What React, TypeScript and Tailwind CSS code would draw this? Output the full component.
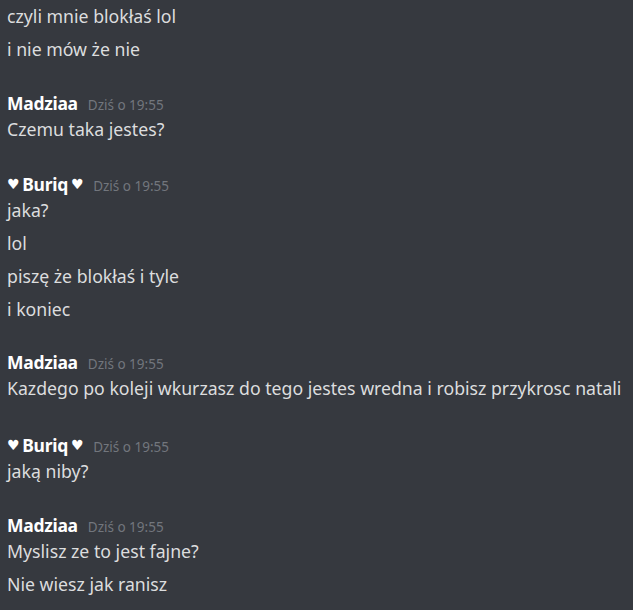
import React from "react";

type Group = { name?: string; heart?: boolean; lines: string[]; mt?: string };

const groups: Group[] = [
  { lines: ["czyli mnie blokłaś lol", "i nie mów że nie"] },
  { name: "Madziaa", lines: ["Czemu taka jestes?"], mt: "mt-[28px]" },
  { name: "Buriq", heart: true, lines: ["jaka?", "lol", "piszę że blokłaś i tyle", "i koniec"], mt: "mt-[29px]" },
  { name: "Madziaa", lines: ["Kazdego po koleji wkurzasz do tego jestes wredna i robisz przykrosc natali"], mt: "mt-[27px]" },
  { name: "Buriq", heart: true, lines: ["jaką niby?"], mt: "mt-[31px]" },
  { name: "Madziaa", lines: ["Myslisz ze to jest fajne?", "Nie wiesz jak ranisz"], mt: "mt-[28px]" },
];

function Heart() {
  return <span className="text-[14px] font-bold" style={{ fontFamily: '"DejaVu Sans", sans-serif' }}>♥</span>;
}

export default function App() {
  return (
    <div
      className="w-[633px] h-[610px] overflow-hidden bg-[#36393f] pl-[7px]"
      style={{ fontFamily: '"Noto Sans", "Open Sans", sans-serif' }}
    >
      {groups.map((g, i) => (
        <div key={i} className={g.mt ?? ""}>
          {g.name && (
            <div className="h-[19px] flex items-center gap-[10px] whitespace-nowrap">
              <span className="text-[17.5px] font-bold text-white tracking-[-0.3px] flex items-center gap-[3px]">
                {g.heart && <Heart />}
                <span>{g.name}</span>
                {g.heart && <Heart />}
              </span>
              <span className="text-[13.5px] text-[#72767d] mt-[3px]">Dziś o 19:55</span>
            </div>
          )}
          {g.lines.map((l, j) => (
            <div key={j} className="h-[33px] flex items-center text-[17.7px] text-[#dcddde] whitespace-nowrap">
              {l}
            </div>
          ))}
        </div>
      ))}
    </div>
  );
}
